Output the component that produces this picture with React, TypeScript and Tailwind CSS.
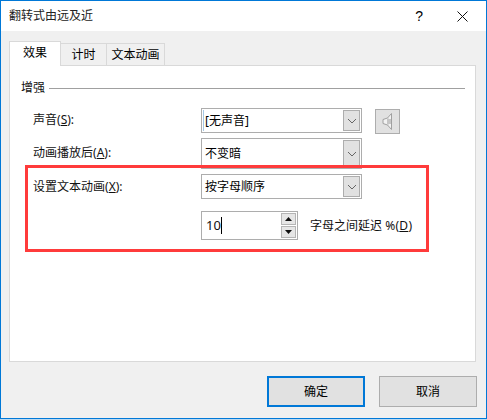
const font = "[font-family:'Noto_Sans',_'Noto_Sans_CJK_SC',sans-serif]";

function Chevron() {
  return (
    <svg viewBox="0 0 10 6" className="h-[6px] w-[10px]">
      <path d="M1 1l4 4 4-4" fill="none" stroke="#666" strokeWidth="1" />
    </svg>
  );
}

function Combo({ value, height, focused }: { value: string; height: string; focused?: boolean }) {
  return (
    <div className={`flex w-[161px] items-stretch border border-[#adadad] bg-white p-[1px] ${height}`}>
      <div className={`flex flex-1 items-center text-[12px] leading-none text-black ${focused ? "" : "pl-[2px]"}`}>
        {focused && <span className="mr-[1px] h-full w-[1px] bg-[#a6c8e4]" />}
        {value}
      </div>
      <div className="flex w-[17px] items-center justify-center border border-[#adadad] bg-[#e1e1e1]">
        <Chevron />
      </div>
    </div>
  );
}

function Label({ text, hotkey, className }: { text: string; hotkey: string; className?: string }) {
  return (
    <span className={`text-[12px] leading-none text-[#111] ${className ?? ""}`}>
      {text}(<span className="underline">{hotkey}</span>):
    </span>
  );
}

function Speaker() {
  return (
    <div className="flex h-[25px] w-[25px] items-center justify-center border border-[#adadad] bg-[#e1e1e1]">
      <svg viewBox="0 0 11 17" className="h-[17px] w-[11px]">
        <path d="M1 6.5L5.5 5 9.5 0.5v16L5.5 12 1 10.5z" fill="#f2f2f2" stroke="#a0a0a0" strokeWidth="1" />
        <path d="M6 5.5v6M8 6v5" stroke="#9a9a9a" strokeWidth="1" />
      </svg>
    </div>
  );
}

function SpinButton({ up }: { up?: boolean }) {
  return (
    <div className="flex h-[12px] w-[15px] items-center justify-center border border-[#b5b5b5] bg-[#e6e6e6]">
      <svg viewBox="0 0 7 4" className="h-[4px] w-[7px]">
        <path d={up ? "M0 4L3.5 0 7 4z" : "M0 0L3.5 4 7 0z"} fill="#111" />
      </svg>
    </div>
  );
}

export default function App() {
  return (
    <div className={`relative flex h-[420px] w-[487px] flex-col overflow-hidden bg-[#b9d9f2] ${font}`}>
      <div className="mb-[1px] flex flex-1 flex-col border border-[#0078d7] bg-[#f0f0f0]">
        {/* title bar */}
        <div className="flex h-[30px] shrink-0 items-center bg-white pl-[8px]">
          <span className="flex-1 text-[12px] text-[#222]">翻转式由远及近</span>
          <span className="mr-[34px] font-['Liberation_Sans'] text-[14px] text-black">?</span>
          <svg viewBox="0 0 11 11" className="mr-[18px] h-[11px] w-[11px]">
            <path d="M0.5 0.5l10 10M10.5 0.5l-10 10" stroke="#111" strokeWidth="1" fill="none" />
          </svg>
        </div>

        {/* tabs */}
        <div className="relative z-10 mt-[10px] flex h-[24px] items-end pl-[8px]">
          <div className="-mb-[1px] flex h-[25px] w-[52px] items-center justify-center border-x border-t border-[#d9d9d9] bg-white pb-[2px] text-[12px] text-black">效果</div>
          <div className="flex h-[22px] w-[46px] items-center justify-center border-t border-r border-[#d9d9d9] text-[12px] text-black">计时</div>
          <div className="flex h-[22px] w-[58px] items-center justify-center border-t border-r border-[#d9d9d9] text-[12px] text-black">文本动画</div>
        </div>

        {/* panel */}
        <div className="ml-[8px] flex h-[297px] w-[467px] flex-col border border-[#d9d9d9] bg-white pl-[11px] pr-[10px]">
          <div className="mt-[15px] flex h-[14px] items-center gap-[4px]">
            <span className="text-[12px] leading-none text-[#111]">增强</span>
            <div className="h-[1px] flex-1 bg-[#a0a0a0]" />
          </div>

          <div className="mt-[13px] flex items-start">
            <Label text="声音" hotkey="S" className="ml-[12px] mt-[6px] w-[168px]" />
            <Combo value="[无声音]" height="h-[25px]" focused />
            <div className="ml-[13px] mt-[1px]"><Speaker /></div>
          </div>

          <div className="mt-[4px] flex items-start">
            <Label text="动画播放后" hotkey="A" className="ml-[12px] mt-[9px] w-[168px]" />
            <Combo value="不变暗" height="h-[31px]" />
          </div>

          <div className="mt-[5px] flex items-center">
            <Label text="设置文本动画" hotkey="X" className="ml-[12px] w-[168px]" />
            <Combo value="按字母顺序" height="h-[25px]" />
          </div>

          <div className="ml-[180px] mt-[12px] flex items-center">
            <div className="flex h-[29px] w-[97px] items-center border border-[#adadad] bg-white pl-[4px] pr-[1px]">
              <span className="text-[13px] leading-none text-[#111]">10</span>
              <span className="h-[17px] w-[1px] bg-black" />
              <div className="ml-auto flex flex-col gap-[1px]">
                <SpinButton up />
                <SpinButton />
              </div>
            </div>
            <span className="ml-[12px] text-[12px] leading-none text-[#111]">
              字母之间延迟 <span className="tracking-[0.3px]">%(<span className="underline">D</span>)</span>
            </span>
          </div>
        </div>

        {/* buttons */}
        <div className="mt-[14px] flex justify-end gap-[14px] pr-[9px]">
          <div className="flex h-[31px] w-[98px] items-center justify-center border-2 border-[#0078d7] bg-[#e1e1e1] text-[12px] text-black">确定</div>
          <div className="flex h-[31px] w-[98px] items-center justify-center border border-[#adadad] bg-[#e1e1e1] text-[12px] text-black">取消</div>
        </div>
      </div>

      {/* red annotation box */}
      <div className="absolute left-[25px] top-[165px] h-[87px] w-[404px] border-[3px] border-[#ff3b3b]" />
    </div>
  );
}
